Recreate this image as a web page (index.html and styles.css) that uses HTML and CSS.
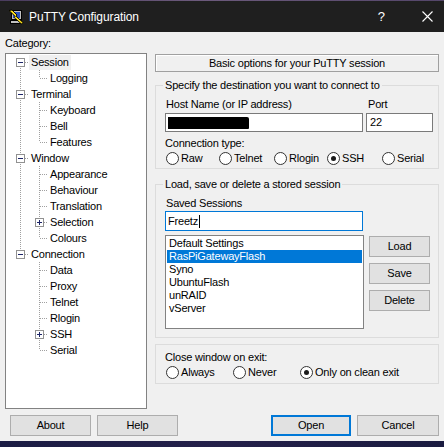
FILE: index.html
```html
<!DOCTYPE html>
<html>
<head>
<meta charset="utf-8">
<title>PuTTY Configuration</title>
<link rel="stylesheet" href="styles.css">
</head>
<body>
<div class="window">
  <div class="edge-top"></div>
  <header class="titlebar">
    <svg class="app-icon" viewBox="0 0 16 16" width="16" height="16">
      <rect x="3.5" y="1.5" width="10" height="9" fill="#c0c0c0" stroke="#000"/>
      <rect x="5" y="3" width="7" height="6" fill="#2a52be"/>
      <rect x="2.5" y="11.5" width="11" height="3" fill="#c0c0c0" stroke="#000"/>
      <path d="M1 1.5 L4 1 L9 6 L8 7.2 L15 13.5 L13.5 15 L6.2 8.6 L7.2 7.4 Z" fill="#ffe21a" stroke="#000" stroke-width="0.9" stroke-linejoin="round"/>
    </svg>
    <span class="title">PuTTY Configuration</span>
    <span class="help">?</span>
    <svg class="close" viewBox="0 0 11 11" width="11" height="11">
      <path d="M0.5 0.5 L10.5 10.5 M10.5 0.5 L0.5 10.5" stroke="#fff" stroke-width="1.1" fill="none"/>
    </svg>
  </header>

  <main class="dialog">
    <section class="category">
      <div class="cat-label">Category:</div>
      <div class="tree">
        <svg class="tree-lines" width="140" height="354" viewBox="0 0 140 354">
          <path d="M14.5 8 V200
                   M19 8.5 H23 M19 40.5 H23 M19 104.5 H23 M19 200.5 H23
                   M33.5 16 V24 M33.5 48 V88 M33.5 112 V184 M33.5 208 V296
                   M34 24.5 H41 M34 56.5 H41 M34 72.5 H41 M34 88.5 H41
                   M34 120.5 H41 M34 136.5 H41 M34 152.5 H41 M34 168.5 H41 M34 184.5 H41
                   M34 216.5 H41 M34 232.5 H41 M34 248.5 H41 M34 264.5 H41 M34 280.5 H41 M34 296.5 H41"
                fill="none" stroke="#a0a0a0" stroke-width="1" stroke-dasharray="1 1"/>
        </svg>
        <div class="row l0"><span class="tog"></span><span class="lbl sel">Session</span></div>
        <div class="row l1"><span class="lbl">Logging</span></div>
        <div class="row l0"><span class="tog"></span><span class="lbl">Terminal</span></div>
        <div class="row l1"><span class="lbl">Keyboard</span></div>
        <div class="row l1"><span class="lbl">Bell</span></div>
        <div class="row l1"><span class="lbl">Features</span></div>
        <div class="row l0"><span class="tog"></span><span class="lbl">Window</span></div>
        <div class="row l1"><span class="lbl">Appearance</span></div>
        <div class="row l1"><span class="lbl">Behaviour</span></div>
        <div class="row l1"><span class="lbl">Translation</span></div>
        <div class="row l1 has"><span class="tog plus"></span><span class="lbl">Selection</span></div>
        <div class="row l1"><span class="lbl">Colours</span></div>
        <div class="row l0"><span class="tog"></span><span class="lbl">Connection</span></div>
        <div class="row l1"><span class="lbl">Data</span></div>
        <div class="row l1"><span class="lbl">Proxy</span></div>
        <div class="row l1"><span class="lbl">Telnet</span></div>
        <div class="row l1"><span class="lbl">Rlogin</span></div>
        <div class="row l1 has"><span class="tog plus"></span><span class="lbl">SSH</span></div>
        <div class="row l1"><span class="lbl">Serial</span></div>
      </div>
    </section>

    <section class="panel">
      <div class="panel-head">Basic options for your PuTTY session</div>

      <fieldset class="group g-dest">
        <legend>Specify the destination you want to connect to</legend>
        <div class="group-body">
          <div class="host-row">
            <div class="field host">
              <div class="caption">Host Name (or IP address)</div>
              <div class="input"><span class="redact"></span></div>
            </div>
            <div class="field port">
              <div class="caption cap-port">Port</div>
              <div class="input input-port">22</div>
            </div>
          </div>
          <div class="caption cap-conn">Connection type:</div>
          <div class="radios radios-conn">
            <span class="radio"><span class="circ"></span>Raw</span>
            <span class="radio"><span class="circ"></span>Telnet</span>
            <span class="radio"><span class="circ"></span>Rlogin</span>
            <span class="radio"><span class="circ on"></span>SSH</span>
            <span class="radio"><span class="circ"></span>Serial</span>
          </div>
        </div>
      </fieldset>

      <fieldset class="group g-store">
        <legend>Load, save or delete a stored session</legend>
        <div class="group-body body-store">
          <div class="caption cap-saved">Saved Sessions</div>
          <div class="input input-focus">Freetz<span class="caret"></span></div>
          <div class="sess-row">
            <div class="list">
              <div class="item">Default Settings</div>
              <div class="item hl">RasPiGatewayFlash</div>
              <div class="item">Syno</div>
              <div class="item">UbuntuFlash</div>
              <div class="item">unRAID</div>
              <div class="item">vServer</div>
            </div>
            <div class="side-btns">
              <div class="btn side">Load</div>
              <div class="btn side">Save</div>
              <div class="btn side">Delete</div>
            </div>
          </div>
        </div>
      </fieldset>

      <fieldset class="group g-close">
        <div class="group-body body-close">
          <div class="caption cap-close">Close window on exit:</div>
          <div class="radios radios-close">
            <span class="radio"><span class="circ"></span>Always</span>
            <span class="radio"><span class="circ"></span>Never</span>
            <span class="radio"><span class="circ on"></span>Only on clean exit</span>
          </div>
        </div>
      </fieldset>
    </section>

    <footer class="footer">
      <div class="btn foot">About</div>
      <div class="btn foot help-btn">Help</div>
      <div class="btn foot open">Open</div>
      <div class="btn foot cancel">Cancel</div>
    </footer>
  </main>
</div>
</body>
</html>
```

FILE: styles.css
```css
* { box-sizing: border-box; }
html, body { margin: 0; padding: 0; }

body {
  width: 444px;
  height: 447px;
  overflow: hidden;
  background: linear-gradient(90deg, #1b1c44, #24204a 50%, #1a1b40);
  font-family: "Liberation Sans", Arial, sans-serif;
  font-size: 11px;
  letter-spacing: -0.2px;
  color: #000;
}

.edge-top {
  height: 1px;
  background: linear-gradient(90deg, #4a3c5e, #6c5a7c 45%, #54466a);
}

.titlebar {
  height: 31px;
  background: #1f1f1f;
  color: #fff;
  display: flex;
  align-items: center;
}
.app-icon { flex: none; margin-left: 8px; }
.title { margin-left: 5px; font-size: 12px; letter-spacing: -0.1px; }
.help { margin-left: auto; margin-right: 37px; font-size: 13px; letter-spacing: 0; }
.close { flex: none; margin-right: 11px; }

.dialog {
  height: 409px;
  background: #f0f0f0;
  padding: 5px 4px 5px 5px;
  display: grid;
  grid-template-columns: 142px 284px;
  grid-template-rows: 372px 21px;
  column-gap: 8px;
  row-gap: 6px;
}

/* Category tree */
.cat-label { line-height: 13px; margin-bottom: 3px; }
.tree {
  position: relative;
  height: 356px;
  border: 1px solid #828282;
  background: #fff;
  overflow: hidden;
}
.tree-lines { position: absolute; left: 0; top: 0; }
.row {
  position: relative;
  display: flex;
  align-items: flex-start;
  height: 16px;
}
.row.l0 { padding-left: 10px; }
.row.l1 { padding-left: 42px; }
.row.l1.has { padding-left: 29px; }
.tog {
  position: relative;
  flex: none;
  width: 9px;
  height: 9px;
  margin-top: 4px;
  margin-right: 4px;
  border: 1px solid #919191;
  background: #fff;
}
.tog::before {
  content: "";
  position: absolute;
  left: 1px;
  top: 3px;
  width: 5px;
  height: 1px;
  background: #1c2468;
}
.tog.plus::after {
  content: "";
  position: absolute;
  left: 3px;
  top: 1px;
  width: 1px;
  height: 5px;
  background: #1c2468;
}
.lbl {
  margin-top: 1px;
  height: 15px;
  line-height: 15px;
  padding: 0 2px;
  white-space: nowrap;
}
.lbl.sel { background: #f0f0f0; }

/* Right panel */
.panel {
  margin-top: 17px;
  display: flex;
  flex-direction: column;
}
.panel-head {
  height: 18px;
  border: 1px solid #a0a0a0;
  box-shadow: inset 1px 1px 0 #fff;
  display: flex;
  align-items: center;
  justify-content: center;
  line-height: 13px;
}

.group {
  margin: 0;
  padding: 0;
  min-width: 0;
  border: 1px solid #dcdcdc;
}
.group legend {
  margin-left: 7px;
  padding: 0 2px;
  line-height: 14px;
}
.g-dest { margin-top: 6px; }
.g-store { margin-top: 8px; }
.g-close { margin-top: 6px; }

.group-body { padding: 0 0 3px 9px; }
.body-store { padding-bottom: 8px; }
.body-close { padding-top: 6px; padding-bottom: 4px; }

.caption { line-height: 13px; height: 13px; white-space: nowrap; }

.host-row { display: flex; margin-top: 6px; }
.field.host { width: 198px; }
.field.host .caption { padding-left: 1px; }
.field.port { width: 67px; margin-left: 3px; }
.cap-port { padding-left: 2px; }
.field .input { margin-top: 2px; }

.input {
  height: 19px;
  border: 1px solid #7a7a7a;
  background: #fff;
  display: flex;
  align-items: center;
  padding-left: 2px;
  line-height: 13px;
}
.input-port { padding-left: 3px; }
.redact {
  width: 81px;
  height: 12px;
  background: #000;
  border-radius: 0 2px 1px 0;
}

.cap-conn { margin-top: 5px; }
.radios { display: grid; margin-left: 1px; margin-top: 2px; }
.radios-conn { grid-template-columns: 53px 55px 53px 55px auto; }
.radios-close { grid-template-columns: 67px 67px auto; }
.radio {
  display: flex;
  align-items: center;
  height: 13px;
  line-height: 13px;
  white-space: nowrap;
}
.circ {
  position: relative;
  flex: none;
  width: 13px;
  height: 13px;
  margin-right: 2px;
  border: 1px solid #333;
  border-radius: 50%;
  background: #fff;
}
.circ.on::after {
  content: "";
  position: absolute;
  left: 3px;
  top: 3px;
  width: 5px;
  height: 5px;
  border-radius: 50%;
  background: #1a1a1a;
}

.cap-saved { margin-top: 6px; padding-left: 1px; }
.input-focus {
  width: 198px;
  height: 20px;
  margin-top: 1px;
  border-color: #0078d7;
}
.caret {
  width: 1px;
  height: 13px;
  margin-left: 1px;
  background: #000;
}

.sess-row { display: flex; margin-top: 4px; }
.list {
  width: 199px;
  height: 94px;
  border: 1px solid #828282;
  background: #fff;
  padding: 1px;
}
.item {
  height: 13px;
  line-height: 13px;
  padding-left: 2px;
  white-space: nowrap;
}
.item.hl { background: #0078d7; color: #fff; }

.side-btns {
  display: flex;
  flex-direction: column;
  gap: 6px;
  margin-left: 5px;
  margin-top: 1px;
}

.btn {
  height: 21px;
  border: 1px solid #adadad;
  background: #e1e1e1;
  display: flex;
  align-items: center;
  justify-content: center;
  line-height: 13px;
}
.btn.side { width: 61px; }

.cap-close { padding-left: 0; }

/* Footer buttons */
.footer {
  grid-column: 1 / -1;
  display: flex;
  padding-left: 5px;
}
.btn.foot { width: 81px; }
.help-btn { margin-left: 6px; }
.btn.open {
  width: 80px;
  margin-left: auto;
  border: 2px solid #0078d7;
}
.btn.cancel { width: 82px; margin-left: 6px; }
```
